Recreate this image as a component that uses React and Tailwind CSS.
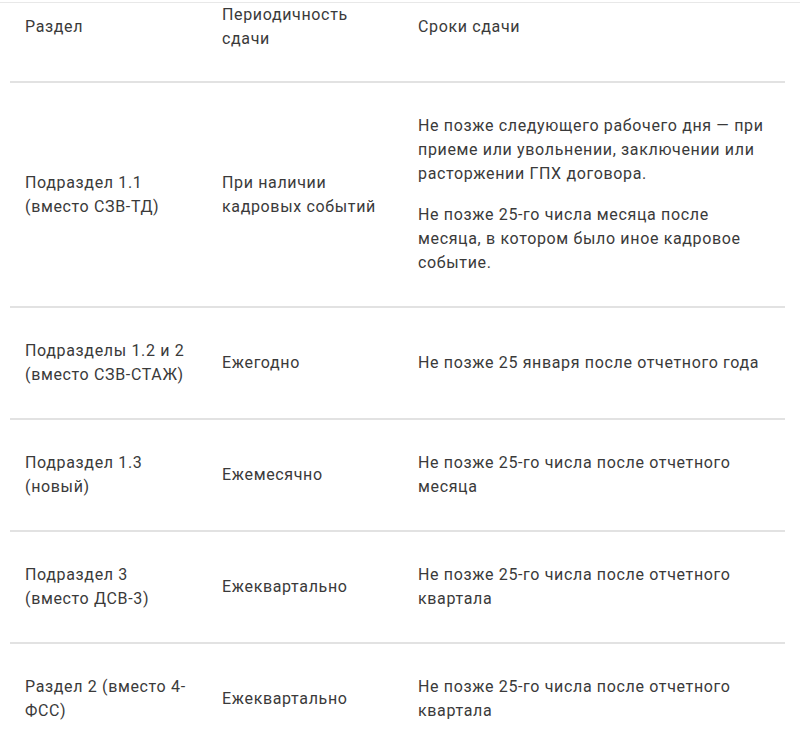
export default function App() {
  const rows = [
    {
      a: "Подраздел 1.1 (вместо СЗВ-ТД)",
      b: "При наличии кадровых событий",
      c: [
        "Не позже следующего рабочего дня — при приеме или увольнении, заключении или расторжении ГПХ договора.",
        "Не позже 25-го числа месяца после месяца, в котором было иное кадровое событие.",
      ],
    },
    {
      a: "Подразделы 1.2 и 2 (вместо СЗВ-СТАЖ)",
      b: "Ежегодно",
      c: ["Не позже 25 января после отчетного года"],
    },
    {
      a: "Подраздел 1.3 (новый)",
      b: "Ежемесячно",
      c: ["Не позже 25-го числа после отчетного месяца"],
    },
    {
      a: "Подраздел 3 (вместо ДСВ-3)",
      b: "Ежеквартально",
      c: ["Не позже 25-го числа после отчетного квартала"],
    },
    {
      a: "Раздел 2 (вместо 4-ФСС)",
      b: "Ежеквартально",
      c: ["Не позже 25-го числа после отчетного квартала"],
    },
  ];
  return (
    <div
      className="w-[800px] h-[750px] overflow-hidden bg-white text-[16px] leading-[24px] tracking-[0.65px] text-[#3a3a3a]"
      style={{ fontFamily: "Roboto, 'Noto Sans', sans-serif" }}
    >
      <div className="mt-[2px] border-t border-[#e8e8e8]">
        <table className="ml-[10px] w-[775px] border-collapse table-fixed">
          <colgroup>
            <col className="w-[197px]" />
            <col className="w-[196px]" />
            <col />
          </colgroup>
          <thead>
            <tr className="border-b-2 border-[#e2e2e2]">
              <th className="font-normal text-left align-middle pl-[15px] pr-[12px] pb-[30px]">Раздел</th>
              <th className="font-normal text-left align-middle pl-[15px] pr-[12px] pb-[30px]">Периодичность сдачи</th>
              <th className="font-normal text-left align-middle pl-[15px] pr-[12px] pb-[30px]">Сроки сдачи</th>
            </tr>
          </thead>
          <tbody>
            {rows.map((r, i) => (
              <tr key={i} className="border-b-2 border-[#e2e2e2]">
                <td className="align-middle pl-[15px] pr-[12px] py-[31px]">{r.a}</td>
                <td className="align-middle pl-[15px] pr-[12px] py-[31px]">{r.b}</td>
                <td className="align-middle pl-[15px] pr-[12px] py-[31px]">
                  <div className="flex flex-col gap-[17px]">
                    {r.c.map((t, j) => (
                      <p key={j}>{t}</p>
                    ))}
                  </div>
                </td>
              </tr>
            ))}
          </tbody>
        </table>
      </div>
    </div>
  );
}
